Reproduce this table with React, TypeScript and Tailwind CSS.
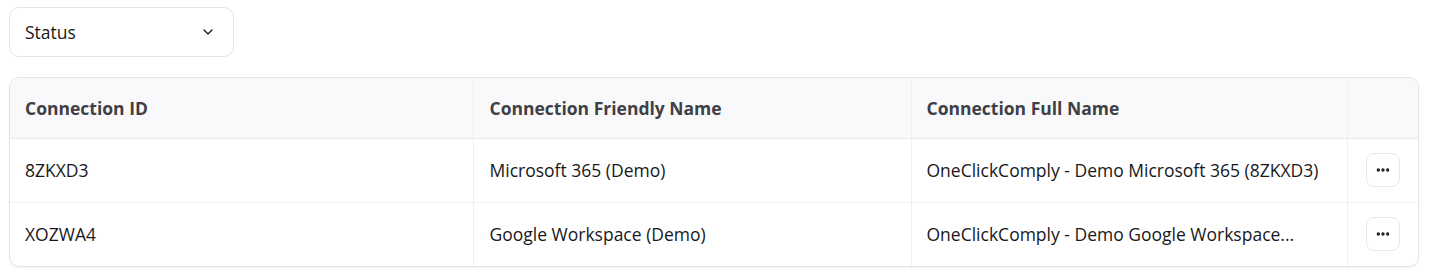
import React from 'react';
import { ChevronDown, Ellipsis } from 'lucide-react';

const connections = [
  { id: '8ZKXD3', friendly: 'Microsoft 365 (Demo)', full: 'OneClickComply - Demo Microsoft 365 (8ZKXD3)' },
  { id: 'XOZWA4', friendly: 'Google Workspace (Demo)', full: 'OneClickComply - Demo Google Workspace...' },
];

export default function App() {
  return (
    <div className="bg-white min-h-[279px] px-[9px] pt-[7px] font-['Open_Sans',sans-serif] text-[#18181b]">
      {/* Status filter */}
      <button className="flex items-center justify-between w-[225px] h-[50px] pl-[15px] pr-[17px] border border-[#e4e4e7] rounded-[10px] bg-white text-[17.5px]">
        <span>Status</span>
        <ChevronDown className="w-4 h-4 text-[#18181b]" strokeWidth={2} />
      </button>

      {/* Connections table */}
      <div className="mt-[20px] w-[1410px] border border-[#e4e4e7] rounded-[10px] overflow-hidden shadow-[0_1px_2px_rgba(0,0,0,0.06)]">
        <table className="w-full table-fixed border-collapse text-[17.5px]">
          <colgroup>
            <col className="w-[463px]" />
            <col className="w-[438px]" />
            <col className="w-[436px]" />
            <col />
          </colgroup>
          <thead>
            <tr className="bg-[#f9f9fb] h-[60px] border-b border-[#e9e9ec]">
              <th className="text-left font-bold text-[#3f3f46] px-[15px]">Connection ID</th>
              <th className="text-left font-bold text-[#3f3f46] pl-[16px] pr-[15px] border-l border-[#efeff1]">Connection Friendly Name</th>
              <th className="text-left font-bold text-[#3f3f46] px-[15px] border-l border-[#efeff1]">Connection Full Name</th>
              <th className="border-l border-[#efeff1]"></th>
            </tr>
          </thead>
          <tbody>
            {connections.map((c, i) => (
              <tr key={c.id} className={i > 0 ? 'h-[64px] border-t border-[#f0f0f2]' : 'h-[64px]'}>
                <td className="px-[15px]">{c.id}</td>
                <td className="pl-[16px] pr-[15px] border-l border-[#efeff1]">{c.friendly}</td>
                <td className="px-[15px] border-l border-[#efeff1] whitespace-nowrap">{c.full}</td>
                <td className="border-l border-[#efeff1]">
                  <div className="flex justify-center">
                    <button className="flex items-center justify-center w-[34px] h-[34px] border border-[#e9e9ec] rounded-[8px] bg-white">
                      <Ellipsis className="w-4 h-4 text-[#18181b]" strokeWidth={3} />
                    </button>
                  </div>
                </td>
              </tr>
            ))}
          </tbody>
        </table>
      </div>
    </div>
  );
}
